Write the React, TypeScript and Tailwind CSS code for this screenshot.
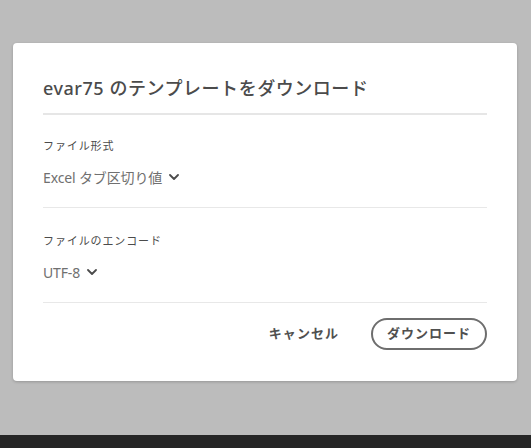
import React from 'react';

const font = { fontFamily: '"Noto Sans", "Noto Sans CJK JP", sans-serif' };

const Chevron = () => (
  <svg viewBox="0 0 10 10" className="w-[10px] h-[10px] ml-[7px] text-[#4b4b4b]" fill="none">
    <path d="M1 3l4 4 4-4" stroke="currentColor" strokeWidth="1.8" strokeLinecap="round" strokeLinejoin="round" />
  </svg>
);

const Field = ({ label, value }: { label: string; value: string }) => (
  <div>
    <div className="text-[11px] leading-[16px] text-[#4b4b4b] tracking-[0.08em]">{label}</div>
    <div className="mt-[13px] flex items-center h-[20px] text-[14px] text-[#707070] tracking-[-0.01em]">
      <span>{value}</span>
      <Chevron />
    </div>
  </div>
);

export default function App() {
  return (
    <div className="w-[531px] h-[448px] bg-[#bcbcbc] flex flex-col overflow-hidden" style={font}>
      <div className="flex-1 pt-[43px] pl-[13px]">
        <div className="w-[504px] h-[338px] bg-white rounded-[4px] shadow-[0_1px_3px_rgba(0,0,0,0.2)] px-[30px] pt-[33px]">
          <h1 className="text-[18px] leading-[24px] font-medium text-[#4b4b4b] tracking-[0.03em]">
            evar75 のテンプレートをダウンロード
          </h1>
          <div className="mt-[13px] h-[2px] bg-[#e6e6e6]" />
          <div className="mt-[23px]">
            <Field label="ファイル形式" value="Excel タブ区切り値" />
          </div>
          <div className="mt-[20px] h-px bg-[#e8e8e8]" />
          <div className="mt-[25px]">
            <Field label="ファイルのエンコード" value="UTF-8" />
          </div>
          <div className="mt-[20px] h-px bg-[#e8e8e8]" />
          <div className="mt-[15px] flex justify-end items-center">
            <button className="h-[32px] px-[14px] mr-[18px] text-[13px] font-semibold text-[#505050] tracking-[0.08em]">
              キャンセル
            </button>
            <button className="h-[32px] w-[116px] rounded-full border-2 border-[#6e6e6e] text-[13px] font-semibold text-[#505050] tracking-[0.08em]">
              ダウンロード
            </button>
          </div>
        </div>
      </div>
      <div className="h-[13px] bg-[#262626]" />
    </div>
  );
}
